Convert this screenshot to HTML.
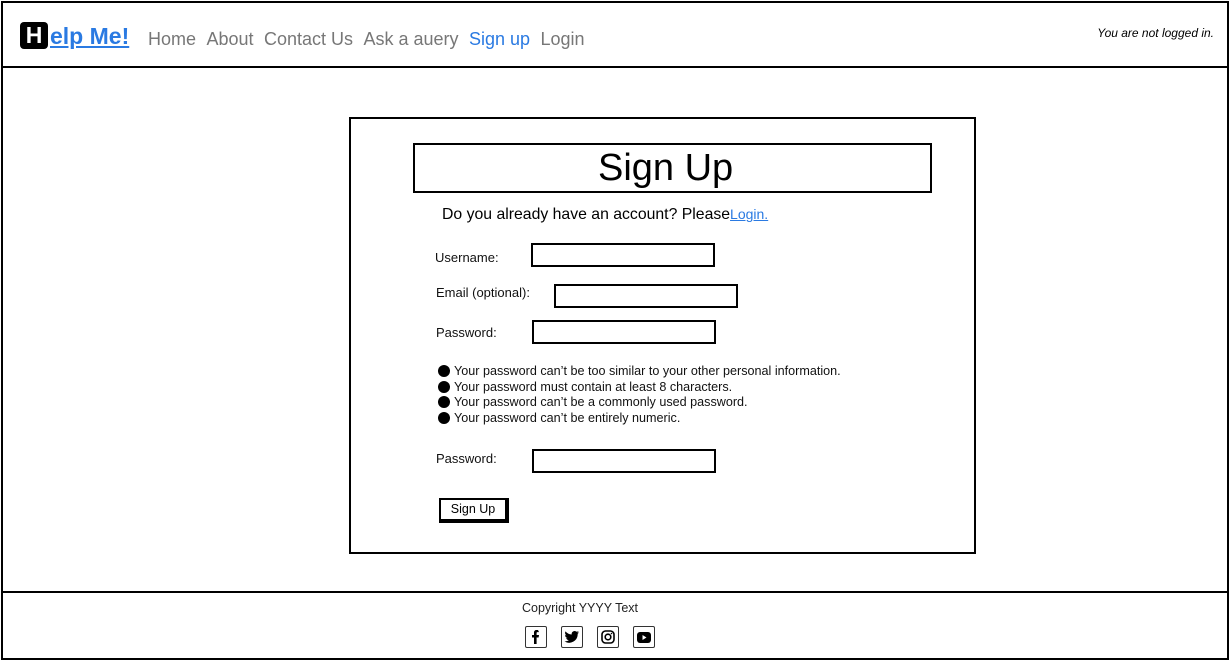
<!DOCTYPE html>
<html><head><meta charset="utf-8"><style>
*{box-sizing:border-box;margin:0;padding:0}
body{width:1230px;height:661px;position:relative;background:#fff;font-family:"Liberation Sans",sans-serif;overflow:hidden}
.abs{position:absolute}
.frame{left:1px;top:1px;width:1228px;height:659px;border:2px solid #000}
.hdr{left:1px;top:66px;width:1228px;height:2px;background:#000}
.ftr{left:1px;top:591px;width:1228px;height:2px;background:#000}
.nav a{color:#777;text-decoration:none;font-size:18px;margin-right:6px}
.box{border:2px solid #000}
.lbl{font-size:13px;color:#111}
.inp{border:2px solid #000;height:24px}
li{font-size:12.6px;list-style:none;line-height:15.5px;color:#111}
li:before{content:"";display:inline-block;width:12px;height:12px;background:#000;border-radius:50%;margin-right:4px;vertical-align:-2px}
.ic{width:22px;height:22px;border:1.5px solid #333;border-radius:2px;display:inline-flex;align-items:center;justify-content:center;margin:0 7px}
</style></head><body>
<div class="abs frame"></div>
<div class="abs hdr"></div>
<div class="abs ftr"></div>
<div class="abs" style="left:20px;top:22px;width:28px;height:27px;background:#000;border-radius:4px;color:#fff;font-size:23px;font-weight:bold;text-align:center;line-height:27px">H</div>
<div class="abs" style="left:50px;top:23px;font-size:23px;font-weight:bold;color:#2a7ae2;text-decoration:underline">elp Me!</div>
<div class="abs nav" style="left:148px;top:29px"><a>Home</a> <a>About</a> <a>Contact Us</a> <a>Ask a auery</a> <a style="color:#2a7ae2">Sign up</a> <a>Login</a></div>
<div class="abs" style="right:16px;top:26px;font-size:12px;font-style:italic">You are not logged in.</div>

<div class="abs box" style="left:349px;top:117px;width:627px;height:437px"></div>
<div class="abs box" style="left:413px;top:143px;width:519px;height:50px;font-size:38px;line-height:46px;padding-left:183px">Sign Up</div>
<div class="abs" style="left:442px;top:206px;font-size:15.8px">Do you already have an account? Please<span style="color:#2a7ae2;text-decoration:underline;font-size:14px">Login.</span></div>
<div class="abs lbl" style="left:435px;top:250px">Username:</div>
<div class="abs inp" style="left:531px;top:243px;width:184px"></div>
<div class="abs lbl" style="left:436px;top:285px">Email (optional):</div>
<div class="abs inp" style="left:554px;top:284px;width:184px"></div>
<div class="abs lbl" style="left:436px;top:325px">Password:</div>
<div class="abs inp" style="left:532px;top:320px;width:184px"></div>
<ul class="abs" style="left:438px;top:364px">
<li>Your password can’t be too similar to your other personal information.</li>
<li>Your password must contain at least 8 characters.</li>
<li>Your password can’t be a commonly used password.</li>
<li>Your password can’t be entirely numeric.</li></ul>
<div class="abs lbl" style="left:436px;top:451px">Password:</div>
<div class="abs inp" style="left:532px;top:449px;width:184px"></div>
<div class="abs" style="left:439px;top:498px;width:70px;height:25px;border:2px solid #000;border-right-width:4px;border-bottom-width:4px;font-size:12.5px;text-align:center;line-height:19px">Sign Up</div>

<div class="abs" style="left:0;width:1160px;top:601px;text-align:center;font-size:12.5px;color:#222">Copyright YYYY Text</div>
<div class="abs" style="left:518px;top:626px;display:flex">
<span class="ic"><svg width="14" height="16" viewBox="0 0 14 16"><path d="M9 1H7.5C6 1 5 2 5 3.5V6H3v2.5h2V15h2.6V8.5h2L10 6H7.6V4c0-.6.3-.9.9-.9H10z" fill="#000"/></svg></span>
<span class="ic"><svg width="16" height="14" viewBox="0 0 16 14"><path d="M15 2.2c-.5.3-1.1.4-1.7.5.6-.4 1-1 1.3-1.6-.6.3-1.2.6-1.9.7A3 3 0 0 0 7.7 4.5 8.5 8.5 0 0 1 1.5 1.4a3 3 0 0 0 .9 4 3 3 0 0 1-1.3-.4 3 3 0 0 0 2.4 3 3 3 0 0 1-1.4 0 3 3 0 0 0 2.8 2.1A6 6 0 0 1 .5 11.4 8.6 8.6 0 0 0 13.7 4V3.7c.6-.4 1-.9 1.3-1.5z" fill="#000"/></svg></span>
<span class="ic"><svg width="14" height="14" viewBox="0 0 14 14"><rect x="1" y="1" width="12" height="12" rx="3.5" fill="none" stroke="#000" stroke-width="1.6"/><circle cx="7" cy="7" r="2.8" fill="none" stroke="#000" stroke-width="1.6"/><circle cx="10.5" cy="3.5" r=".8"/></svg></span>
<span class="ic"><svg width="14" height="11" viewBox="0 0 14 11"><rect x="0" y="0" width="14" height="11" rx="3"/><path d="M5.5 3v5l4-2.5z" fill="#fff"/></svg></span>
</div>
</body></html>
